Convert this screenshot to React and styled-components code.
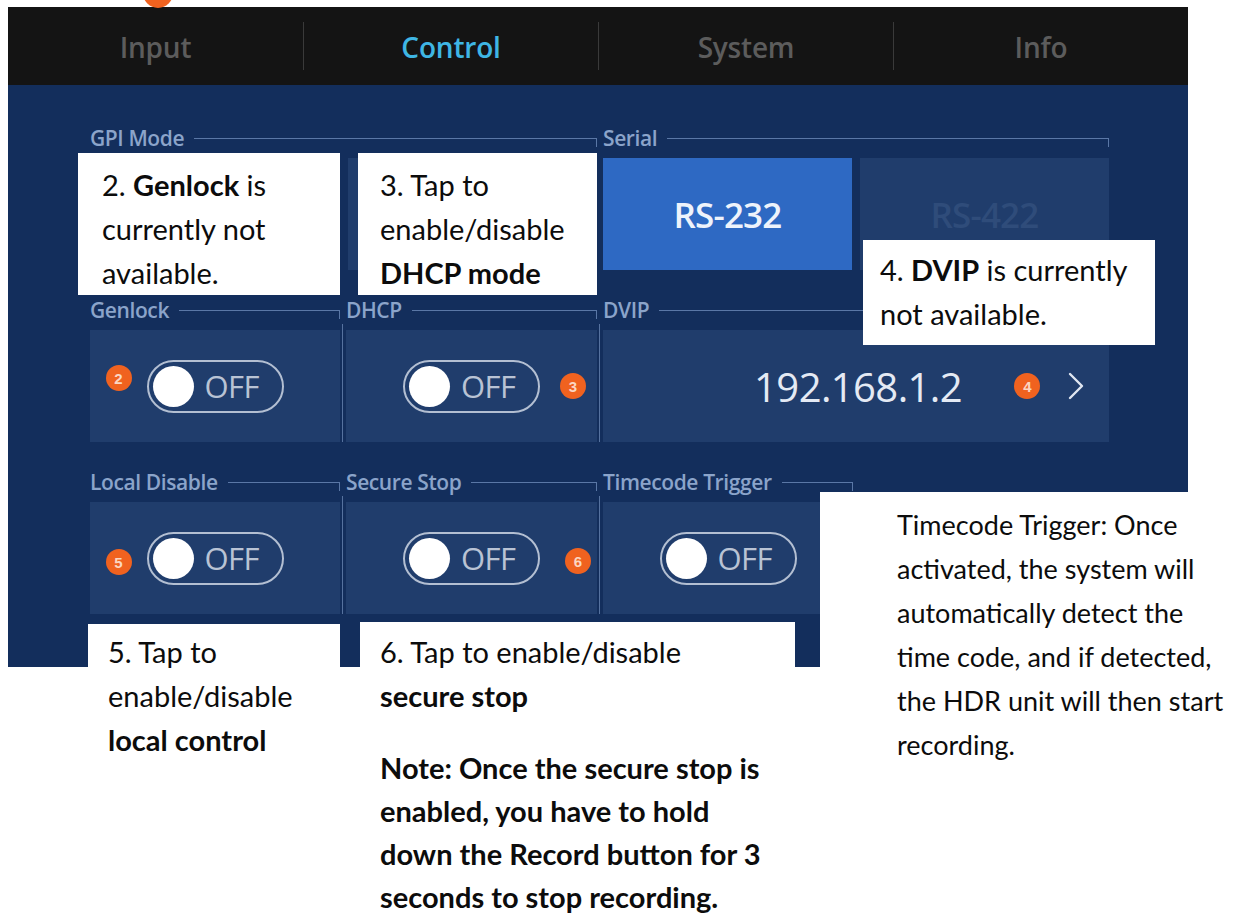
import React from "react";
import styled, { createGlobalStyle } from "styled-components";

const GlobalStyle = createGlobalStyle`
  html, body {
    margin: 0;
    padding: 0;
    background: #ffffff;
  }
  body {
    font-family: "Open Sans", "Noto Sans", sans-serif;
  }
`;

const Page = styled.div`
  position: relative;
  width: 1243px;
  height: 918px;
  overflow: hidden;
  background: #ffffff;
  padding: 7px 0 0 8px;
  box-sizing: border-box;
`;

const Device = styled.div`
  width: 1180px;
  display: flex;
  flex-direction: column;
`;

const TabBar = styled.nav`
  height: 78px;
  background: #141414;
  display: grid;
  grid-template-columns: repeat(4, 1fr);
  align-items: center;
`;

const Tab = styled.div`
  height: 48px;
  line-height: 50px;
  text-align: center;
  font-size: 28px;
  font-weight: 600;
  letter-spacing: -0.2px;
  color: ${(p) => (p.$active ? "#3fb6e4" : "#5c5c5c")};
  & + & {
    border-left: 1px solid #3a3a3a;
  }
`;

const Body = styled.div`
  height: 582px;
  background: #132e5c;
  box-sizing: border-box;
  padding: 43px 0 0 82px;
  display: flex;
  flex-direction: column;
  gap: 30px;
`;

const Row = styled.div`
  display: grid;
  grid-template-columns: 250px 251px 250px 250px;
  column-gap: 6px;
`;

const Group = styled.section`
  grid-column: span ${(p) => p.$span || 1};
  display: flex;
  flex-direction: column;
  gap: 10px;
`;

const GroupHead = styled.div`
  height: 20px;
  display: flex;
  align-items: center;
  font-size: 21px;
  font-weight: 600;
  letter-spacing: -0.4px;
  color: #8ba4ca;
  white-space: nowrap;
`;

const Rule = styled.span`
  flex: 1;
  height: 8px;
  margin: 8px 0 0 10px;
  border-top: 1px solid #5a77a6;
  border-right: 1px solid #5a77a6;
`;

const Cells = styled.div`
  display: grid;
  grid-template-columns: repeat(${(p) => p.$count || 1}, 1fr);
  column-gap: 8px;
`;

const Cell = styled.div`
  position: relative;
  height: 112px;
  background: ${(p) => (p.$selected ? "#2e69c3" : "#203d6c")};
  display: flex;
  align-items: center;
  justify-content: ${(p) => (p.$end ? "flex-end" : "center")};
  padding-right: ${(p) => (p.$end ? "25px" : "0")};
  box-sizing: border-box;

  ${(p) =>
    p.$divided &&
    `
    &::before {
      content: "";
      position: absolute;
      left: -4px;
      top: -6px;
      bottom: 0;
      width: 1px;
      background: #56729f;
    }
  `}
`;

const OptionText = styled.span`
  font-size: 35px;
  font-weight: 600;
  letter-spacing: -0.8px;
  color: ${(p) => (p.$dim ? "#2f4c7a" : "#eef3fb")};
`;

const SwitchWrap = styled.div`
  position: relative;
`;

const Switch = styled.div`
  width: 137px;
  height: 53px;
  box-sizing: border-box;
  border: 2px solid #b3bfd2;
  border-radius: 27px;
  display: flex;
  align-items: center;
  padding-left: 4px;
  gap: 11px;
`;

const Knob = styled.span`
  width: 41px;
  height: 41px;
  border-radius: 50%;
  background: #ffffff;
`;

const SwitchText = styled.span`
  font-size: 31px;
  color: #b9c3d4;
  letter-spacing: -0.5px;
`;

const Badge = styled.span`
  position: absolute;
  top: 50%;
  margin-top: ${(p) => p.$lift || -13}px;
  ${(p) => (p.$side === "left" ? `right: calc(100% + ${p.$gap}px);` : `left: calc(100% + ${p.$gap}px);`)}
  width: 26px;
  height: 26px;
  border-radius: 50%;
  background: #f0621f;
  color: #fbd6c2;
  font-family: "Liberation Sans", Arial, sans-serif;
  font-size: 15px;
  font-weight: 700;
  display: flex;
  align-items: center;
  justify-content: center;
`;

const ValueLine = styled.div`
  position: relative;
  display: flex;
  align-items: center;
  gap: 106px;
`;

const Value = styled.span`
  position: relative;
  font-size: 40px;
  color: #e4eaf4;
  letter-spacing: -0.6px;
`;

const Chevron = styled.svg`
  width: 16px;
  height: 28px;
  display: block;
`;

const TopMarker = styled.span`
  position: absolute;
  left: 143px;
  top: -22px;
  width: 30px;
  height: 30px;
  border-radius: 50%;
  background: #f0621f;
`;

const Callout = styled.div`
  position: absolute;
  left: ${(p) => p.$x}px;
  top: ${(p) => p.$y}px;
  width: ${(p) => p.$w}px;
  height: ${(p) => p.$h}px;
  padding: ${(p) => p.$pad};
  box-sizing: border-box;
  background: #ffffff;
  font-family: Lato, "Open Sans", sans-serif;
  font-size: ${(p) => p.$size || 29}px;
  line-height: 44px;
  color: #0c0c0c;
  white-space: nowrap;

  b {
    font-weight: 700;
  }
`;

const Note = styled.p`
  margin: 28px 0 0;
  font-weight: 700;
  line-height: 43px;
`;

function Toggle({ badge, side = "left", gap = 16, lift }) {
  return (
    <SwitchWrap>
      <Switch>
        <Knob />
        <SwitchText>OFF</SwitchText>
      </Switch>
      {badge && (
        <Badge $side={side} $gap={gap} $lift={lift}>
          {badge}
        </Badge>
      )}
    </SwitchWrap>
  );
}

function Field({ label, span, count, children }) {
  return (
    <Group $span={span}>
      <GroupHead>
        {label}
        <Rule />
      </GroupHead>
      <Cells $count={count}>{children}</Cells>
    </Group>
  );
}

export default function App() {
  return (
    <>
      <GlobalStyle />
      <Page>
        <Device>
          <TabBar>
            <Tab>Input</Tab>
            <Tab $active>Control</Tab>
            <Tab>System</Tab>
            <Tab>Info</Tab>
          </TabBar>
          <Body>
            <Row>
              <Field label="GPI Mode" span={2} count={2}>
                <Cell />
                <Cell />
              </Field>
              <Field label="Serial" span={2} count={2}>
                <Cell $selected>
                  <OptionText>RS-232</OptionText>
                </Cell>
                <Cell>
                  <OptionText $dim>RS-422</OptionText>
                </Cell>
              </Field>
            </Row>
            <Row>
              <Field label="Genlock">
                <Cell>
                  <Toggle badge="2" side="left" gap={15} lift={-21} />
                </Cell>
              </Field>
              <Field label="DHCP">
                <Cell $divided>
                  <Toggle badge="3" side="right" gap={20} />
                </Cell>
              </Field>
              <Field label="DVIP" span={2}>
                <Cell $divided $end>
                  <ValueLine>
                    <Value>
                      192.168.1.2
                      <Badge $side="right" $gap={52}>4</Badge>
                    </Value>
                    <Chevron viewBox="0 0 16 28">
                      <polyline
                        points="2,2 14,14 2,26"
                        fill="none"
                        stroke="#dfe6f1"
                        strokeWidth="2.4"
                        strokeLinecap="round"
                        strokeLinejoin="round"
                      />
                    </Chevron>
                  </ValueLine>
                </Cell>
              </Field>
            </Row>
            <Row>
              <Field label="Local Disable">
                <Cell>
                  <Toggle badge="5" side="left" gap={15} lift={-9} />
                </Cell>
              </Field>
              <Field label="Secure Stop">
                <Cell $divided>
                  <Toggle badge="6" side="right" gap={25} lift={-10} />
                </Cell>
              </Field>
              <Field label="Timecode Trigger">
                <Cell $divided>
                  <Toggle />
                </Cell>
              </Field>
            </Row>
          </Body>
        </Device>

        <TopMarker />

        <Callout $x={78} $y={153} $w={262} $h={142} $pad="10px 0 0 24px">
          2. <b>Genlock</b> is
          <br />
          currently not
          <br />
          available.
        </Callout>

        <Callout $x={358} $y={153} $w={239} $h={142} $pad="10px 0 0 22px">
          3. Tap to
          <br />
          enable/disable
          <br />
          <b>DHCP mode</b>
        </Callout>

        <Callout $x={863} $y={240} $w={292} $h={105} $pad="8px 0 0 17px">
          4. <b>DVIP</b> is currently
          <br />
          not available.
        </Callout>

        <Callout $x={88} $y={624} $w={252} $h={294} $pad="6px 0 0 20px">
          5. Tap to
          <br />
          enable/disable
          <br />
          <b>local control</b>
        </Callout>

        <Callout $x={360} $y={622} $w={435} $h={296} $pad="8px 0 0 20px">
          6. Tap to enable/disable
          <br />
          <b>secure stop</b>
          <Note>
            Note: Once the secure stop is
            <br />
            enabled, you have to hold
            <br />
            down the Record button for 3
            <br />
            seconds to stop recording.
          </Note>
        </Callout>

        <Callout $x={820} $y={492} $w={423} $h={426} $pad="11px 0 0 77px" $size={27}>
          Timecode Trigger: Once
          <br />
          activated, the system will
          <br />
          automatically detect the
          <br />
          time code, and if detected,
          <br />
          the HDR unit will then start
          <br />
          recording.
        </Callout>
      </Page>
    </>
  );
}
